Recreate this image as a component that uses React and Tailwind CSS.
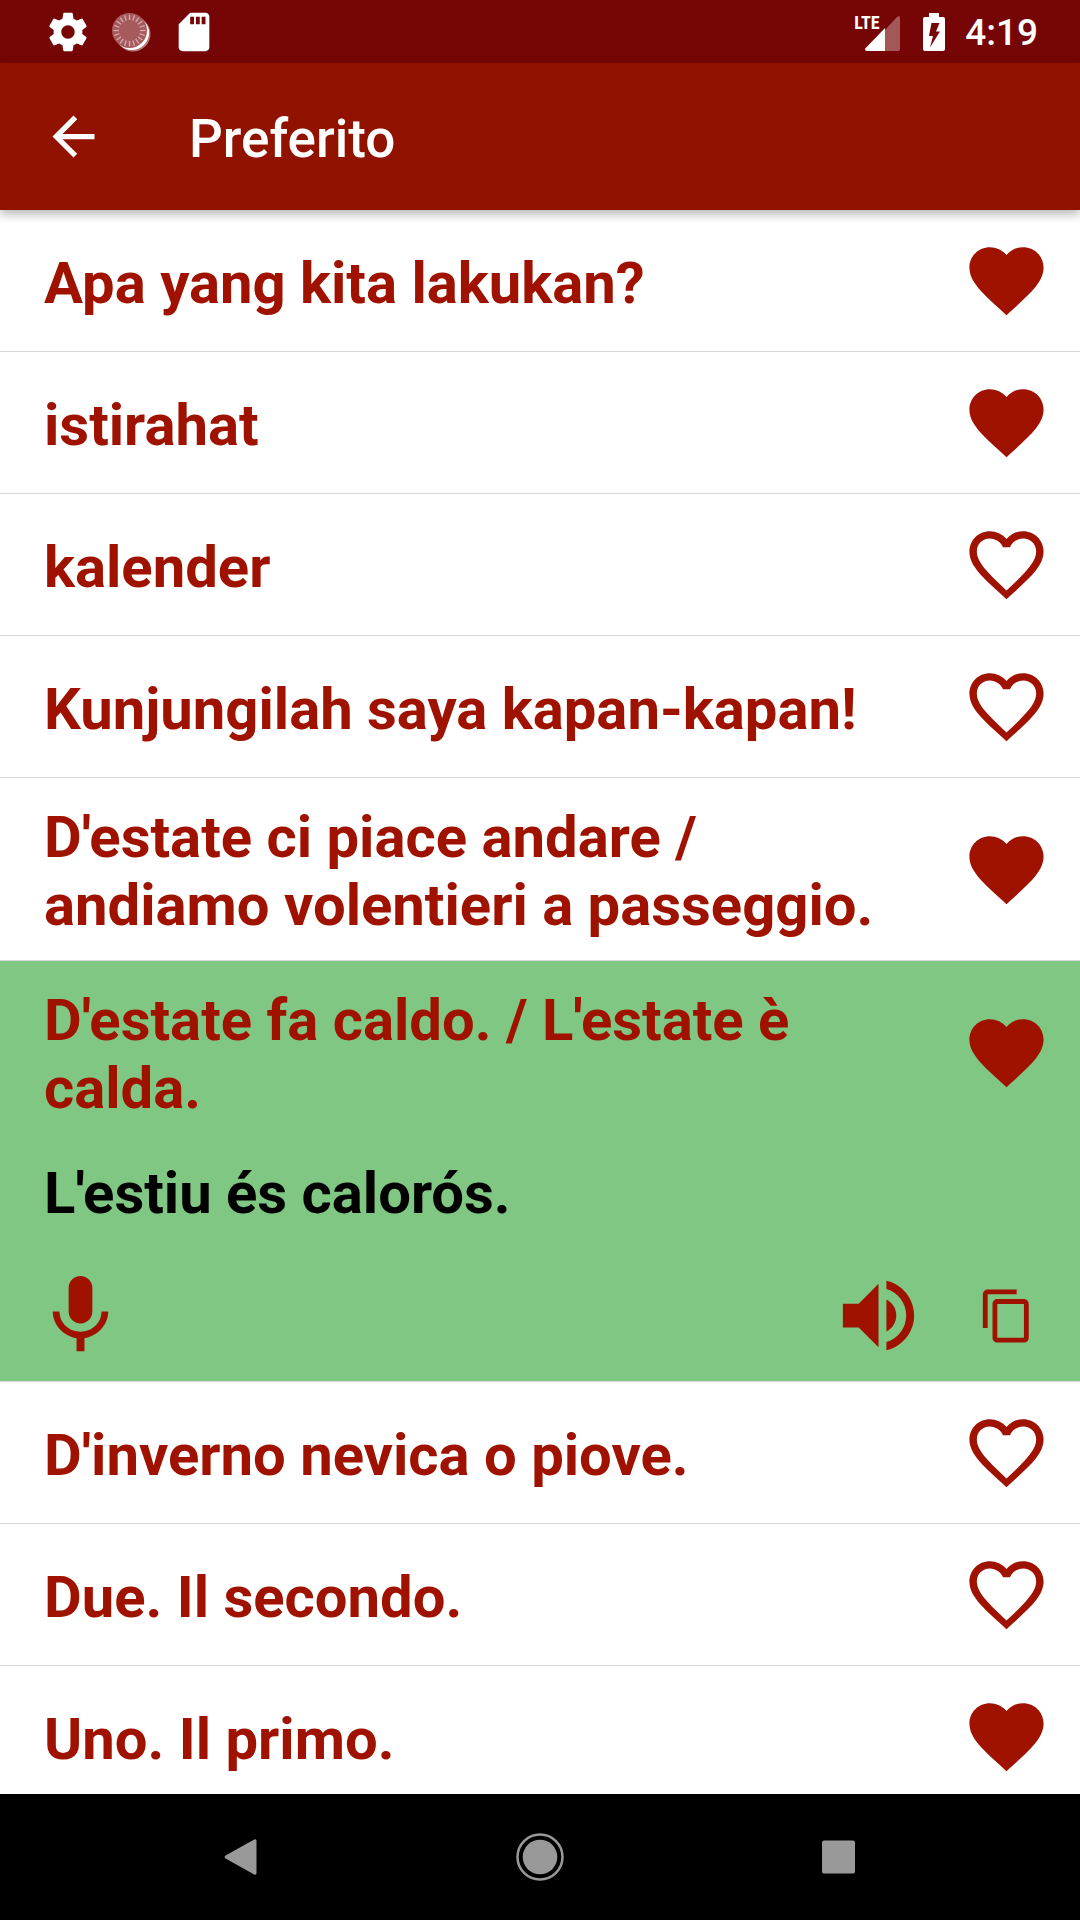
import { useState } from "react";

const initialPhrases = [
  { text: "Apa yang kita lakukan?", liked: true },
  { text: "istirahat", liked: true },
  { text: "kalender", liked: false },
  { text: "Kunjungilah saya kapan-kapan!", liked: false },
  { text: "D'estate ci piace andare / andiamo volentieri a passeggio.", liked: true },
  {
    text: "D'estate fa caldo. / L'estate è calda.",
    translation: "L'estiu és calorós.",
    liked: true,
  },
  { text: "D'inverno nevica o piove.", liked: false },
  { text: "Due. Il secondo.", liked: false },
  { text: "Uno. Il primo.", liked: true },
];

const HEART_FULL =
  "M12 21.35l-1.45-1.32C5.4 15.36 2 12.28 2 8.5 2 5.42 4.42 3 7.5 3c1.74 0 3.41.81 4.5 2.09C13.09 3.81 14.76 3 16.5 3 19.58 3 22 5.42 22 8.5c0 3.78-3.4 6.86-8.55 11.54L12 21.35z";
const HEART_OUTLINE =
  "M16.5 3c-1.74 0-3.41.81-4.5 2.09C10.91 3.81 9.24 3 7.5 3 4.42 3 2 5.42 2 8.5c0 3.78 3.4 6.86 8.55 11.54L12 21.35l1.45-1.32C18.6 15.36 22 12.28 22 8.5 22 5.42 19.58 3 16.5 3zm-3.5 15.05l-1 .95-1-.95C7 14.24 4 11.39 4 8.5 4 6.5 5.5 5 7.5 5c1.54 0 3.04.99 3.57 2.36h1.87C13.46 5.99 14.96 5 16.5 5c2 0 3.5 1.5 3.5 3.5 0 2.89-3 5.74-7 9.55z";
const MIC =
  "M12 14c1.66 0 2.99-1.34 2.99-3L15 5c0-1.66-1.34-3-3-3S9 3.34 9 5v6c0 1.66 1.34 3 3 3zm5.3-3c0 3-2.54 5.1-5.3 5.1S6.7 14 6.7 11H5c0 3.41 2.72 6.23 6 6.72V21h2v-3.28c3.28-.48 6-3.3 6-6.72h-1.7z";
const VOLUME =
  "M3 9v6h4l5 5V4L7 9H3zm13.5 3c0-1.77-1.02-3.29-2.5-4.03v8.05c1.48-.73 2.5-2.25 2.5-4.02zM14 3.23v2.06c2.89.86 5 3.54 5 6.71s-2.11 5.85-5 6.71v2.06c4.01-.91 7-4.49 7-8.77s-2.99-7.86-7-8.77z";
const COPY =
  "M16 1H4c-1.1 0-2 .9-2 2v14h2V3h12V1zm3 4H8c-1.1 0-2 .9-2 2v14c0 1.1.9 2 2 2h11c1.1 0 2-.9 2-2V7c0-1.1-.9-2-2-2zm0 16H8V7h11v14z";
const BACK = "M20 11H7.83l5.59-5.59L12 4l-8 8 8 8 1.41-1.41L7.83 13H20v-2z";
const GEAR =
  "M19.43 12.98c.04-.32.07-.64.07-.98s-.03-.66-.07-.98l2.11-1.65c.19-.15.24-.42.12-.64l-2-3.46c-.12-.22-.39-.3-.61-.22l-2.49 1c-.52-.4-1.08-.73-1.69-.98l-.38-2.65C14.46 2.18 14.25 2 14 2h-4c-.25 0-.46.18-.49.42l-.38 2.65c-.61.25-1.17.59-1.69.98l-2.49-1c-.23-.09-.49 0-.61.22l-2 3.46c-.13.22-.07.49.12.64l2.11 1.65c-.04.32-.07.65-.07.98s.03.66.07.98l-2.11 1.65c-.19.15-.24.42-.12.64l2 3.46c.12.22.39.3.61.22l2.49-1c.52.4 1.08.73 1.69.98l.38 2.65c.03.24.24.42.49.42h4c.25 0 .46-.18.49-.42l.38-2.65c.61-.25 1.17-.59 1.69-.98l2.49 1c.23.09.49 0 .61-.22l2-3.46c.12-.22.07-.49-.12-.64l-2.11-1.65zM12 15.5c-1.93 0-3.5-1.57-3.5-3.5s1.57-3.5 3.5-3.5 3.5 1.57 3.5 3.5-1.57 3.5-3.5 3.5z";
const SD_CARD =
  "M18 2h-8L4.02 8 4 20c0 1.1.9 2 2 2h12c1.1 0 2-.9 2-2V4c0-1.1-.9-2-2-2zm-6 6h-2V4h2v4zm3 0h-2V4h2v4zm3 0h-2V4h2v4z";

function Icon({ path, className }) {
  return (
    <svg viewBox="0 0 24 24" fill="currentColor" className={className} aria-hidden="true">
      <path d={path} />
    </svg>
  );
}

function SyncDisc() {
  const ticks = Array.from({ length: 20 }, (_, i) => i * 18);
  return (
    <svg viewBox="0 0 46 46" className="size-[46px]" aria-hidden="true">
      <circle cx="25" cy="25" r="17.5" fill="#fff" fillOpacity="0.45" />
      <circle cx="24" cy="24" r="17" fill="#fff" />
      <circle cx="21.5" cy="21.5" r="17.5" fill="#a65a5c" />
      <g stroke="#fff" strokeOpacity="0.5" strokeWidth="1.3">
        {ticks.map((a) => (
          <line key={a} x1="21.5" y1="5.5" x2="21.5" y2="11" transform={`rotate(${a} 21.5 21.5)`} />
        ))}
      </g>
    </svg>
  );
}

function StatusBar() {
  return (
    <div className="flex h-[63px] shrink-0 items-center justify-between bg-[#760606] pr-[42px] pl-[45px] text-white">
      <div className="flex items-center gap-[17px]">
        <Icon path={GEAR} className="size-[46px]" />
        <SyncDisc />
        <Icon path={SD_CARD} className="size-[46px]" />
      </div>
      <div className="flex items-center">
        <div className="relative h-[38px] w-[46px]">
          <svg viewBox="0 0 46 38" className="h-[38px] w-[46px]" aria-hidden="true">
            <path d="M31 17L43 4c1.500-1.500 3-1 3 1v31q0 2-2 2H31z" fill="#fff" fillOpacity="0.33" />
            <path d="M31 15v23H13c-2 0-2.500-1.500-1.500-2.700z" fill="#fff" />
          </svg>
          <span className="absolute top-0 left-0 font-['Roboto_Condensed','Liberation_Sans_Narrow',Roboto,sans-serif] text-lg leading-5 font-bold">
            LTE
          </span>
        </div>
        <svg viewBox="0 0 22 38" className="ml-[23px] h-[38px] w-[22px]" aria-hidden="true">
          <path
            fill="#fff"
            fillRule="evenodd"
            d="M6 0h10v4h4q2 0 2 2v30q0 2-2 2H2q-2 0-2-2V6q0-2 2-2h4zM8.500 10L6 23h4L7 34.500 17 18.500h-4L16.500 10z"
          />
        </svg>
        <time className="ml-5 pt-0.5 text-[37px] leading-[44px] font-medium">4:19</time>
      </div>
    </div>
  );
}

function PhraseRow({ phrase, onLike }) {
  const open = Boolean(phrase.translation);
  return (
    <li className={`border-b border-[#d8d8d8] ${open ? "bg-[#81c784]" : "bg-white"}`}>
      <div className="flex min-h-[141px] items-center gap-14 pr-[29px] pl-11">
        <h2 className="flex-1 pt-[25px] pb-[21px]">{phrase.text}</h2>
        <button
          type="button"
          aria-pressed={phrase.liked}
          aria-label={`Preferito: ${phrase.text}`}
          onClick={onLike}
          className="shrink-0"
        >
          <Icon path={phrase.liked ? HEART_FULL : HEART_OUTLINE} className="size-[89px]" />
        </button>
      </div>
      {open && (
        <>
          <p className="px-11 pt-4 text-black">{phrase.translation}</p>
          <div className="flex items-center pt-[41px] pr-11 pb-[18px] pl-[33px]">
            <button type="button" aria-label="Registra">
              <Icon path={MIC} className="size-[95px]" />
            </button>
            <button type="button" aria-label="Ascolta" className="ml-auto">
              <Icon path={VOLUME} className="size-[95px]" />
            </button>
            <button type="button" aria-label="Copia" className="ml-[52px]">
              <Icon path={COPY} className="size-[58px]" />
            </button>
          </div>
        </>
      )}
    </li>
  );
}

function NavBar() {
  return (
    <nav className="grid h-[126px] shrink-0 grid-cols-3 bg-black px-[92px] text-[#999]">
      <button type="button" aria-label="Indietro" className="flex items-center justify-center">
        <svg viewBox="0 0 48 48" className="size-12" fill="currentColor" aria-hidden="true">
          <path d="M9 22.200L37.200 6.500q2.300-1 2.300 1.500v32q0 2.500-2.300 1.500L9 25.800q-2.800-1.800 0-3.600z" />
        </svg>
      </button>
      <button type="button" aria-label="Home" className="flex items-center justify-center">
        <svg viewBox="0 0 48 48" className="size-12" aria-hidden="true">
          <circle cx="24" cy="24" r="22.500" fill="none" stroke="currentColor" strokeWidth="2.500" />
          <circle cx="24" cy="24" r="17.300" fill="currentColor" />
        </svg>
      </button>
      <button type="button" aria-label="Recenti" className="flex items-center justify-center">
        <svg viewBox="0 0 48 48" className="size-12" fill="currentColor" aria-hidden="true">
          <rect x="7" y="7.500" width="33" height="33" rx="2" />
        </svg>
      </button>
    </nav>
  );
}

export default function App() {
  const [phrases, setPhrases] = useState(initialPhrases);
  const toggleLike = (index) =>
    setPhrases((list) => list.map((p, i) => (i === index ? { ...p, liked: !p.liked } : p)));

  return (
    <div className="flex h-screen flex-col bg-white font-[Roboto,sans-serif]">
      <StatusBar />
      <header className="relative z-10 flex h-[147px] shrink-0 items-center bg-[#921200] pl-[42px] text-white shadow-[0_4px_10px_rgba(0,0,0,0.3)]">
        <button type="button" aria-label="Torna indietro">
          <Icon path={BACK} className="size-[63px]" />
        </button>
        <h1 className="ml-[84px] pt-1 text-[53px] leading-[62px] font-medium">Preferito</h1>
      </header>
      <main className="min-h-0 flex-1 overflow-y-auto [scrollbar-width:none]">
        <ul className="text-[58px] leading-[68px] font-bold text-[#a01200]">
          {phrases.map((phrase, i) => (
            <PhraseRow key={phrase.text} phrase={phrase} onLike={() => toggleLike(i)} />
          ))}
        </ul>
      </main>
      <NavBar />
    </div>
  );
}
